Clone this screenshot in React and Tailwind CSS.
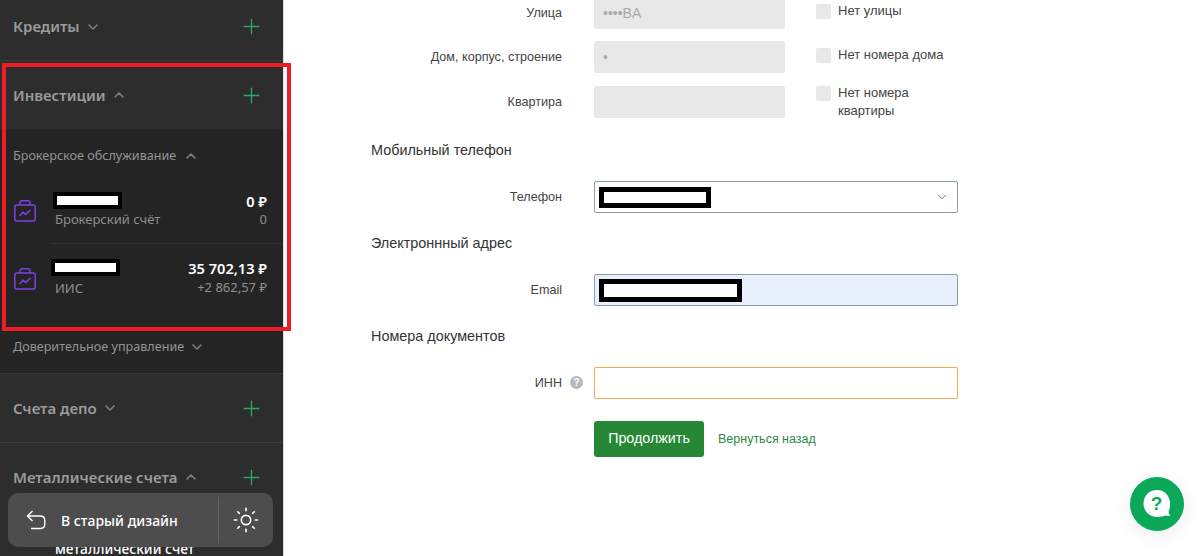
import React from "react";
import { ChevronDown, ChevronUp, Plus, Sun } from "lucide-react";

const sans = { fontFamily: '"Noto Sans", sans-serif' };

function Chev({ up, className = "" }) {
  const C = up ? ChevronUp : ChevronDown;
  return <C size={16} strokeWidth={2.4} className={"text-[#7f7f7f] " + className} />;
}

function Head({ title, up, height }) {
  return (
    <div className={"flex items-center pl-[13px] pr-[19px] " + height}>
      <span className="text-[15px] font-semibold text-[#9b9b9b]">{title}</span>
      <Chev up={up} className="ml-[5px]" />
      <Plus size={25} strokeWidth={1.3} className="ml-auto text-[#2fa866]" />
    </div>
  );
}

function Case({ className = "" }) {
  return (
    <svg width="22" height="22" viewBox="0 0 22 22" fill="none" stroke="#7d3fe8" strokeWidth="1.5" className={"shrink-0 " + className}>
      <path d="M6 5V2.800C6 1.500 6.800 .8 8 .8h6c1.200 0 2 .7 2 2V5" />
      <rect x=".8" y="5" width="20.400" height="16" rx="2" />
      <path d="M5.500 16l3.500-3.600 2.500 2 5-4.400" strokeWidth="1.600" />
    </svg>
  );
}

function Account({ nameClass, sub, subClass, value, delta, deltaClass, valueClass, divider, height, iconTop }) {
  return (
    <div className={"flex " + height}>
      <div className={"w-[51px] pl-[14px] " + iconTop}><Case /></div>
      <div className={"flex-1 flex justify-between pr-[16px] pl-[4px] " + (divider ? "border-b border-[#323232]" : "")}>
        <div className="flex flex-col">
          <div className={"border-[4px] border-black bg-white h-[17px] w-[69px] " + nameClass} />
          <div className={"text-[13px] leading-[18px] text-[#8f8f8f] " + subClass}>{sub}</div>
        </div>
        <div className={"flex flex-col items-end " + valueClass}>
          <div className="text-[14.600px] leading-[18px] font-semibold text-white">{value}</div>
          <div className={"text-[13px] leading-[18px] text-[#8f8f8f] " + deltaClass}>{delta}</div>
        </div>
      </div>
    </div>
  );
}

function Sidebar() {
  return (
    <aside style={sans} className="w-[284px] shrink-0 h-[556px] overflow-hidden bg-[#2d2d2d] border-r border-[#dcdcdc]">
      <div className="border-b border-[#3d3d3d]">
        <Head title="Кредиты" height="h-[53px]" />
        <div className="h-[7px]" />
      </div>
      <Head title="Инвестиции" up height="h-[68px]" />
      <div className="bg-[#242424] h-[245px] border-b border-[#3a3a3a]">
        <div className="flex items-center h-[47px] pt-[7px] pl-[13px] text-[12.600px] text-[#949494]">
          Брокерское обслуживание
          <Chev up className="ml-[7px]" />
        </div>
        <Account nameClass="mt-[16px] ml-[-2px]" subClass="mt-[1px]" sub="Брокерский счёт" value="0 ₽" delta="0" valueClass="pt-[16px]" deltaClass="mt-0" divider height="h-[68px]" iconTop="pt-[24px]" />
        <Account nameClass="mt-[15px] ml-[-4px]" subClass="mt-[3px]" sub="ИИС" value="35 702,13 ₽" delta="+2 862,57 ₽" valueClass="pt-[15px]" deltaClass="mt-[1px]" height="h-[75px]" iconTop="pt-[24px]" />
        <div className="flex items-center h-[20px] mt-[18px] pl-[13px] text-[12.600px] text-[#949494]">
          Доверительное управление
          <Chev className="ml-[5px]" />
        </div>
      </div>
      <div className="border-b border-[#3d3d3d]">
        <Head title="Счета депо" height="h-[68px]" />
      </div>
      <Head title="Металлические счета" up height="h-[68px]" />
      <div className="pl-[55px] mt-[29px] text-[13.800px] leading-[18px] font-medium text-white">металлический счет</div>
    </aside>
  );
}

function Label({ children }) {
  return <div className="w-[191px] shrink-0 text-right text-[12.600px] text-[#444]">{children}</div>;
}

function Check({ children, offset = "mt-[5px]", box = "mt-[2px]" }) {
  return (
    <div className={"flex items-start gap-[7px] ml-[31px] w-[128px] self-start " + offset}>
      <div className={"w-[15px] h-[15px] shrink-0 rounded-[2px] bg-[#e8e8e8] " + box} />
      <div className="text-[13px] leading-[18px] text-[#444]">{children}</div>
    </div>
  );
}

function DisabledRow({ label, value, check, mt, offset, box }) {
  return (
    <div className={"flex items-center h-[32px] " + mt}>
      <Label>{label}</Label>
      <div className="ml-[32px] w-[191px] h-[32px] rounded-[2px] bg-[#e8e8e8] flex items-center pl-[9px] text-[14px] text-[#aaaaaa]">{value}</div>
      <Check offset={offset} box={box}>{check}</Check>
    </div>
  );
}

function Heading({ children, mt }) {
  return <div className={"h-[20px] leading-[20px] text-[14.400px] text-[#333] " + mt}>{children}</div>;
}

function Main() {
  return (
    <main style={{ fontFamily: '"Liberation Sans", sans-serif' }} className="flex-1 pl-[87px] -mt-[3px]">
      <DisabledRow label="Улица" value="••••BA" check="Нет улицы" mt="" offset="mt-[5px]" box="mt-[2px]" />
      <DisabledRow label="Дом, корпус, строение" value="•" check="Нет номера дома" mt="mt-[12px]" offset="mt-[5px]" box="mt-[2px]" />
      <DisabledRow label="Квартира" value="" check={<>Нет номера<br />квартиры</>} mt="mt-[13px]" offset="-mt-[2px]" box="mt-[2px]" />
      <Heading mt="mt-[22px]">Мобильный телефон</Heading>
      <div className="flex items-center h-[32px] mt-[21px]">
        <Label>Телефон</Label>
        <div className="ml-[32px] w-[364px] h-[32px] rounded-[2px] border border-[#8c9ca8] flex items-center justify-between pl-[4px] pr-[8px]">
          <div className="w-[112px] h-[21px] border-[5px] border-black bg-white" />
          <ChevronDown size={14} strokeWidth={1.6} className="text-[#666]" />
        </div>
      </div>
      <Heading mt="mt-[20px]">Электроннный адрес</Heading>
      <div className="flex items-center h-[32px] mt-[21px]">
        <Label>Email</Label>
        <div className="ml-[32px] w-[364px] h-[32px] rounded-[2px] border border-[#8c9ca8] bg-[#e8f0fe] flex items-center pl-[4px]">
          <div className="w-[143px] h-[23px] border-[5px] border-black bg-white" />
        </div>
      </div>
      <Heading mt="mt-[20px]">Номера документов</Heading>
      <div className="flex items-center h-[32px] mt-[21px]">
        <Label>ИНН</Label>
        <div className="relative ml-[32px] w-[364px] h-[32px] rounded-[2px] border border-[#f4a950] bg-white">
          <div className="absolute left-[-25px] top-[8px] w-[13px] h-[13px] rounded-full bg-[#b4b9bc] text-white text-[10px] leading-[13px] font-bold text-center">?</div>
        </div>
      </div>
      <div className="flex items-center mt-[22px] ml-[223px]">
        <button className="w-[110px] h-[36px] rounded-[3px] bg-[#268734] text-white text-[14.300px]">Продолжить</button>
        <a className="ml-[14px] text-[12.500px] text-[#2d8a45]">Вернуться назад</a>
      </div>
    </main>
  );
}

export default function App() {
  return (
    <div className="relative w-[1200px] h-[556px] overflow-hidden bg-white flex">
      <Sidebar />
      <Main />
      <div className="absolute left-[2px] top-[63px] w-[289px] h-[268px] border-[4px] border-[#ee1c25]" />
      <div style={sans} className="absolute left-[8px] top-[493px] w-[265px] h-[54px] rounded-[10px] bg-[#4d4d4d] flex items-center text-white">
        <svg width="20" height="20" viewBox="0 0 20 20" fill="none" stroke="currentColor" strokeWidth="1.4" className="ml-[18px]">
          <path d="M6.500 1L1.500 6l5 5" />
          <path d="M1.500 6H14c3 0 4.800 1.800 4.800 4.500v3.500c0 2.500-1.500 4.500-4.300 4.500H5" />
        </svg>
        <span className="ml-[15px] text-[14px] font-medium w-[157px]">В старый дизайн</span>
        <div className="w-px h-[46px] bg-[#666]" />
        <Sun size={28} strokeWidth={1.4} className="ml-[13px]" />
      </div>
      <div className="absolute left-[1130px] top-[477px] w-[54px] h-[54px] rounded-full bg-[#0aa858] shadow-[0_4px_16px_rgba(90,90,130,0.12)] flex items-center justify-center">
        <svg width="30" height="30" viewBox="0 0 30 30">
          <path d="M15 1C7 1 1.500 7 1.500 14.500S7.500 28 15 28c3.500 0 6-.6 8.800-1.400 1.600.4 3 .4 4.700-.1-1.200-1-1.800-2.200-2-3.800 1.300-2.200 1.500-5.200 1.500-8.200C28 7 23 1 15 1z" fill="#fff" />
          <text x="14.500" y="21" textAnchor="middle" fontSize="19" fontWeight="700" fill="#0aa858" fontFamily="Liberation Sans, sans-serif">?</text>
        </svg>
      </div>
    </div>
  );
}
